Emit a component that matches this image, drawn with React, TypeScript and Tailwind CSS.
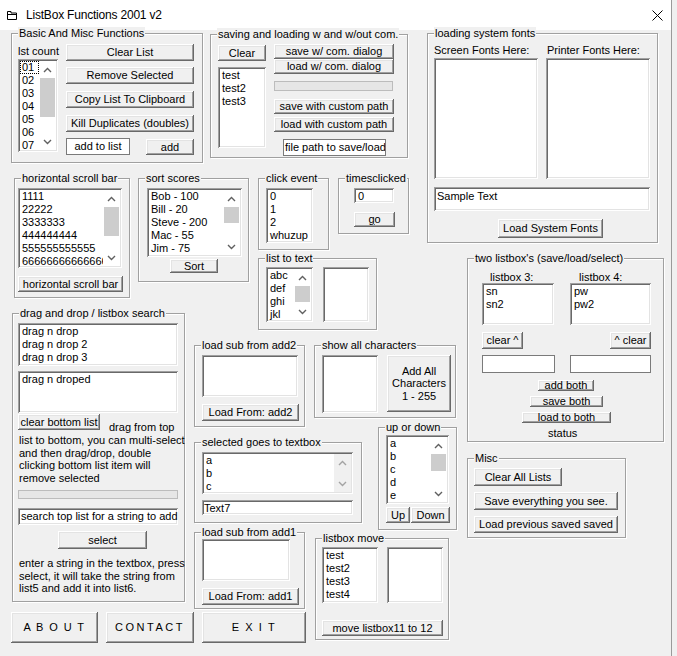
import type { ReactNode } from "react";

const sunken =
  "bg-white shadow-[inset_1px_1px_0_#a0a0a0,inset_-1px_-1px_0_#ffffff,inset_2px_2px_0_#696969,inset_-2px_-2px_0_#e3e3e3] p-[2px]";
const raised =
  "bg-[#f0f0f0] shadow-[inset_-1px_-1px_0_#696969,inset_1px_1px_0_#ffffff,inset_-2px_-2px_0_#a0a0a0,inset_2px_2px_0_#e3e3e3]";

function Group({
  label,
  className = "",
  children,
}: {
  label: string;
  className?: string;
  children?: ReactNode;
}) {
  return (
    <div
      className={`shrink-0 border border-[#a0a0a0] shadow-[inset_1px_1px_0_#ffffff,1px_1px_0_#ffffff] ${className}`}
    >
      <div className="-mt-[7px] ml-[6px] w-fit bg-[#f0f0f0] px-[1px] leading-[13px] whitespace-nowrap">
        {label}
      </div>
      {children}
    </div>
  );
}

function Btn({
  children,
  className = "",
}: {
  children: ReactNode;
  className?: string;
}) {
  return (
    <button
      type="button"
      className={`${raised} flex shrink-0 items-center justify-center overflow-hidden whitespace-nowrap text-center ${className}`}
    >
      {children}
    </button>
  );
}

function Chevron({ down, off }: { down?: boolean; off?: boolean }) {
  return (
    <svg
      width="9"
      height="6"
      viewBox="0 0 9 6"
      className={down ? "rotate-180" : ""}
    >
      <path
        d="M1 5 L4.5 1.5 L8 5"
        fill="none"
        stroke={off ? "#a3a3a3" : "#606060"}
        strokeWidth="1.4"
      />
    </svg>
  );
}

function ScrollBar({ thumb, off }: { thumb?: string; off?: boolean }) {
  return (
    <div
      className={`flex w-[17px] shrink-0 flex-col ${off ? "bg-[#f0f0f0]" : "bg-white"}`}
    >
      <div className="flex h-[17px] shrink-0 items-center justify-center">
        <Chevron off={off} />
      </div>
      <div className="min-h-0 flex-1">
        {thumb && <div className={`mx-[1px] bg-[#cdcdcd] ${thumb}`} />}
      </div>
      <div className="flex h-[17px] shrink-0 items-center justify-center">
        <Chevron down off={off} />
      </div>
    </div>
  );
}

function ListBox({
  items = [],
  className = "",
  thumb,
  off,
  focus,
}: {
  items?: string[];
  className?: string;
  thumb?: string;
  off?: boolean;
  focus?: boolean;
}) {
  return (
    <div className={`${sunken} flex shrink-0 overflow-hidden ${className}`}>
      <div className="min-w-0 flex-1 overflow-hidden">
        {items.map((t, i) => (
          <div
            key={i}
            className={`h-[13px] overflow-hidden whitespace-nowrap pl-[2px] leading-[13px] ${
              focus && i === 0
                ? "outline outline-dotted outline-black -outline-offset-1"
                : ""
            }`}
          >
            {t}
          </div>
        ))}
      </div>
      {(thumb || off) && <ScrollBar thumb={thumb} off={off} />}
    </div>
  );
}

function TextBox({
  text = "",
  className = "",
  flat,
}: {
  text?: string;
  className?: string;
  flat?: boolean;
}) {
  return (
    <div
      className={`shrink-0 overflow-hidden whitespace-nowrap leading-[13px] ${
        flat ? "border border-[#7a7a7a] bg-white" : sunken
      } ${className}`}
    >
      {text}
    </div>
  );
}

function Progress({ className = "" }: { className?: string }) {
  return (
    <div
      className={`shrink-0 border border-[#bcbcbc] bg-[#e6e6e6] ${className}`}
    />
  );
}

export default function App() {
  return (
    <div className="h-[656px] w-[677px] overflow-hidden bg-[#f0f0f0] font-['Liberation_Sans',Arial,sans-serif] text-[11px] leading-[13px] text-black">
      <div className="flex h-full w-[672px] flex-col border-r border-[#9a9a9a]">
        {/* title bar */}
        <div className="flex h-[30px] shrink-0 items-center bg-white">
          <svg width="12" height="11" viewBox="0 0 12 11" className="ml-[6px]">
            <path
              d="M1.5 1.5 H5 V3 H10.5 V9.5 H1.5 Z M1.5 4.5 H10.5"
              fill="none"
              stroke="#000"
              strokeWidth="1"
            />
          </svg>
          <span className="ml-[8px] text-[12px] tracking-[-0.2px]">
            ListBox Functions 2001 v2
          </span>
          <svg width="11" height="11" viewBox="0 0 11 11" className="mr-[8px] ml-auto">
            <path d="M0.5 0.5 L10.5 10.5 M10.5 0.5 L0.5 10.5" stroke="#000" strokeWidth="1" />
          </svg>
        </div>

        {/* form body */}
        <div className="flex flex-1">
          {/* left part */}
          <div className="flex w-[418px] shrink-0 flex-col pl-[11px]">
            {/* row 1 */}
            <div className="mt-[3px] flex items-start">
              <Group label="Basic And Misc Functions" className="h-[130px] w-[192px]">
                <div className="flex items-start">
                  <div className="ml-[6px] w-[40px]">
                    <div className="mt-[5px] whitespace-nowrap">lst count</div>
                    <ListBox
                      className="mt-[1px] h-[93px] w-[40px]"
                      items={["01", "02", "03", "04", "05", "06", "07"]}
                      thumb="h-[39px]"
                      focus
                    />
                  </div>
                  <div className="ml-[8px] w-[128px]">
                    <Btn className="mt-[4px] h-[17px] w-[128px]">Clear List</Btn>
                    <Btn className="mt-[6px] h-[17px] w-[128px]">Remove Selected</Btn>
                    <Btn className="mt-[7px] h-[17px] w-[128px]">Copy List To Clipboard</Btn>
                    <Btn className="mt-[7px] h-[17px] w-[128px]">Kill Duplicates (doubles)</Btn>
                    <div className="mt-[6px] flex items-start">
                      <TextBox
                        flat
                        text="add to list"
                        className="flex h-[17px] w-[64px] items-center justify-center"
                      />
                      <Btn className="mt-[1px] ml-[16px] h-[16px] w-[48px]">add</Btn>
                    </div>
                  </div>
                </div>
              </Group>

              <Group
                label="saving and loading w and w/out com."
                className="mt-[1px] ml-[7px] h-[124px] w-[198px]"
              >
                <div className="flex items-start">
                  <div className="ml-[7px] w-[48px]">
                    <Btn className="mt-[4px] h-[16px] w-[48px]">Clear</Btn>
                    <ListBox
                      className="mt-[6px] h-[81px] w-[48px]"
                      items={["test", "test2", "test3"]}
                    />
                  </div>
                  <div className="ml-[8px] w-[120px]">
                    <Btn className="mt-[3px] h-[15px] w-[120px]">save w/ com. dialog</Btn>
                    <Btn className="h-[15px] w-[120px]">load w/ com. dialog</Btn>
                    <Progress className="mt-[7px] h-[10px] w-[119px]" />
                    <Btn className="mt-[8px] h-[15px] w-[120px]">save with custom path</Btn>
                    <Btn className="mt-[3px] h-[15px] w-[120px]">load with custom path</Btn>
                    <TextBox
                      flat
                      text="file path to save/load"
                      className="mt-[7px] ml-[9px] flex h-[17px] w-[103px] items-center pl-[1px]"
                    />
                  </div>
                </div>
              </Group>
            </div>

            {/* row 2 */}
            <div className="mt-[15px] flex items-start">
              <Group label="horizontal scroll bar" className="ml-[3px] h-[120px] w-[116px]">
                <ListBox
                  className="mt-[3px] ml-[3px] h-[80px] w-[104px]"
                  items={[
                    "1111",
                    "22222",
                    "3333333",
                    "444444444",
                    "555555555555",
                    "66666666666666666",
                  ]}
                  thumb="h-[29px]"
                />
                <Btn className="mt-[8px] ml-[3px] h-[16px] w-[105px]">horizontal scroll bar</Btn>
              </Group>

              <Group label="sort scores" className="ml-[8px] h-[104px] w-[111px]">
                <ListBox
                  className="mt-[3px] ml-[8px] h-[69px] w-[95px]"
                  items={["Bob - 100", "Bill - 20", "Steve - 200", "Mac - 55", "Jim - 75"]}
                  thumb="h-[16px]"
                />
                <Btn className="mt-[2px] ml-[31px] h-[14px] w-[48px]">Sort</Btn>
              </Group>

              <div className="ml-[9px] flex flex-col">
                <div className="flex items-start">
                  <Group label="click event" className="h-[72px] w-[71px]">
                    <ListBox
                      className="mt-[3px] ml-[7px] h-[55px] w-[47px]"
                      items={["0", "1", "2", "whuzup"]}
                    />
                  </Group>
                  <Group label="timesclicked" className="ml-[9px] h-[56px] w-[71px]">
                    <TextBox text="0" className="mt-[3px] ml-[15px] h-[15px] w-[40px] pl-[4px]" />
                    <Btn className="mt-[9px] ml-[15px] h-[15px] w-[41px]">
                      <span className="underline underline-offset-1">g</span>o
                    </Btn>
                  </Group>
                </div>
                <Group label="list to text" className="mt-[8px] h-[72px] w-[119px]">
                  <div className="flex items-start">
                    <ListBox
                      className="mt-[2px] ml-[7px] h-[55px] w-[47px]"
                      items={["abc", "def", "ghi", "jkl"]}
                      thumb="h-[16px]"
                    />
                    <ListBox className="mt-[2px] ml-[10px] h-[55px] w-[46px]" />
                  </div>
                </Group>
              </div>
            </div>

            {/* row 3 */}
            <div className="-mt-[17px] flex items-start">
              <div className="flex w-[183px] shrink-0 flex-col">
                <Group label="drag and drop / listbox search" className="ml-[1px] h-[289px] w-[173px]">
                  <ListBox
                    className="mt-[3px] ml-[5px] h-[43px] w-[160px]"
                    items={["drag n drop", "drag n drop 2", "drag n drop 3"]}
                  />
                  <ListBox className="mt-[5px] ml-[5px] h-[42px] w-[160px]" items={["drag n droped"]} />
                  <div className="mt-[1px] flex items-start">
                    <Btn className="ml-[5px] h-[16px] w-[82px]">clear bottom list</Btn>
                    <span className="mt-[7px] ml-[9px] whitespace-nowrap">drag from top</span>
                  </div>
                  <div className="ml-[6px] leading-[12.5px] whitespace-nowrap">
                    list to bottom, you can multi-select
                    <br />
                    and then drag/drop, double
                    <br />
                    clicking bottom list item will
                    <br />
                    remove selected
                  </div>
                  <Progress className="mt-[6px] ml-[5px] h-[9px] w-[160px]" />
                  <TextBox
                    text="search top list for a string to add to list"
                    className="mt-[9px] ml-[5px] h-[17px] w-[160px] pl-[3px]"
                  />
                  <Btn className="mt-[6px] ml-[45px] h-[18px] w-[89px]">select</Btn>
                  <div className="mt-[8px] ml-[6px] leading-[12.5px] whitespace-nowrap">
                    enter a string in the textbox, press
                    <br />
                    select, it will take the string from
                    <br />
                    list5 and add it into list6.
                  </div>
                </Group>
                <div className="mt-[10px] flex">
                  <Btn className="h-[31px] w-[87px] tracking-[1.4px]">A B O U T</Btn>
                  <Btn className="ml-[8px] h-[31px] w-[88px] tracking-[2.5px]">CONTACT</Btn>
                </div>
              </div>

              <div className="flex w-[112px] shrink-0 flex-col">
                <Group label="load sub from add2" className="mt-[32px] h-[82px] w-[111px]">
                  <ListBox className="mt-[3px] ml-[7px] h-[42px] w-[96px]" />
                  <Btn className="mt-[7px] ml-[7px] h-[17px] w-[97px]">Load From: add2</Btn>
                </Group>
                <Group label="selected goes to textbox" className="mt-[15px] h-[81px] w-[168px]">
                  <ListBox
                    className="mt-[3px] ml-[7px] h-[42px] w-[151px]"
                    items={["a", "b", "c"]}
                    off
                  />
                  <TextBox text="Text7" className="mt-[6px] ml-[7px] h-[15px] w-[151px] pl-[2px]" />
                </Group>
                <Group label="load sub from add1" className="mt-[9px] h-[77px] w-[111px]">
                  <ListBox className="ml-[7px] h-[42px] w-[88px]" />
                  <Btn className="mt-[7px] ml-[7px] h-[17px] w-[97px]">Load From: add1</Btn>
                </Group>
                <Btn className="mt-[3px] ml-[8px] h-[31px] w-[104px] tracking-[1.6px]">E X I T</Btn>
              </div>

              <div className="ml-[8px] flex flex-col">
                <Group label="show all characters" className="mt-[32px] h-[73px] w-[142px]">
                  <div className="flex items-start">
                    <ListBox className="mt-[3px] ml-[7px] h-[58px] w-[56px]" />
                    <Btn className="mt-[3px] ml-[9px] h-[57px] w-[64px] flex-col leading-[12.5px]">
                      <span>Add All</span>
                      <span>Characters</span>
                      <span>1 - 255</span>
                    </Btn>
                  </div>
                </Group>
                <Group label="up or down" className="mt-[9px] ml-[64px] h-[103px] w-[79px]">
                  <ListBox
                    className="mt-[1px] ml-[7px] h-[69px] w-[63px]"
                    items={["a", "b", "c", "d", "e"]}
                    thumb="h-[17px]"
                  />
                  <div className="mt-[3px] ml-[7px] flex">
                    <Btn className="h-[16px] w-[24px]">Up</Btn>
                    <Btn className="ml-[1px] h-[16px] w-[39px]">Down</Btn>
                  </div>
                </Group>
                <Group label="listbox move" className="mt-[8px] ml-[1px] h-[102px] w-[134px]">
                  <div className="flex items-start">
                    <ListBox
                      className="mt-[2px] ml-[6px] h-[56px] w-[56px]"
                      items={["test", "test2", "test3", "test4"]}
                    />
                    <ListBox className="mt-[2px] ml-[9px] h-[56px] w-[56px]" />
                  </div>
                  <Btn className="mt-[17px] ml-[6px] h-[16px] w-[121px]">move listbox11 to 12</Btn>
                </Group>
              </div>
            </div>
          </div>

          {/* right part */}
          <div className="flex flex-col">
            <Group label="loading system fonts" className="mt-[3px] ml-[9px] h-[210px] w-[231px]">
              <div className="flex items-start">
                <div className="ml-[6px] w-[104px]">
                  <div className="mt-[4px] whitespace-nowrap">Screen Fonts Here:</div>
                  <ListBox className="mt-[1px] h-[121px] w-[104px]" />
                </div>
                <div className="ml-[8px] w-[104px]">
                  <div className="mt-[4px] ml-[1px] whitespace-nowrap">Printer Fonts Here:</div>
                  <ListBox className="mt-[1px] h-[121px] w-[104px]" />
                </div>
              </div>
              <TextBox text="Sample Text" className="mt-[8px] ml-[6px] h-[24px] w-[216px] pt-[3px] pl-[3px]" />
              <Btn className="mt-[8px] ml-[70px] h-[19px] w-[105px]">Load System Fonts</Btn>
            </Group>

            <Group label="two listbox's (save/load/select)" className="mt-[15px] ml-[49px] h-[184px] w-[197px]">
              <div className="flex items-start">
                <div className="ml-[14px] w-[73px]">
                  <div className="mt-[6px] ml-[8px] leading-[12px] whitespace-nowrap">listbox 3:</div>
                  <ListBox className="h-[42px] w-[72px]" items={["sn", "sn2"]} />
                  <Btn className="mt-[7px] h-[17px] w-[41px]">clear ^</Btn>
                  <TextBox flat className="mt-[6px] h-[18px] w-[73px]" />
                </div>
                <div className="ml-[15px] w-[81px]">
                  <div className="mt-[6px] ml-[9px] leading-[12px] whitespace-nowrap">listbox 4:</div>
                  <ListBox className="h-[42px] w-[81px]" items={["pw", "pw2"]} />
                  <Btn className="mt-[7px] ml-[40px] h-[17px] w-[41px]">^ clear</Btn>
                  <TextBox flat className="mt-[6px] h-[18px] w-[81px]" />
                </div>
              </div>
              <Btn className="mt-[7px] ml-[70px] h-[11px] w-[56px] leading-[11px]">add both</Btn>
              <Btn className="mt-[5px] ml-[62px] h-[11px] w-[73px] leading-[11px]">save both</Btn>
              <Btn className="mt-[5px] ml-[54px] h-[11px] w-[89px] leading-[11px]">load to both</Btn>
              <div className="mt-[4px] ml-[80px]">status</div>
            </Group>

            <Group label="Misc" className="mt-[16px] ml-[49px] h-[80px] w-[159px]">
              <Btn className="mt-[3px] ml-[6px] h-[18px] w-[88px]">Clear All Lists</Btn>
              <Btn className="mt-[6px] ml-[6px] h-[18px] w-[144px]">Save everything you see.</Btn>
              <Btn className="mt-[6px] ml-[6px] h-[17px] w-[144px]">Load previous saved saved</Btn>
            </Group>
          </div>
        </div>
      </div>
    </div>
  );
}
